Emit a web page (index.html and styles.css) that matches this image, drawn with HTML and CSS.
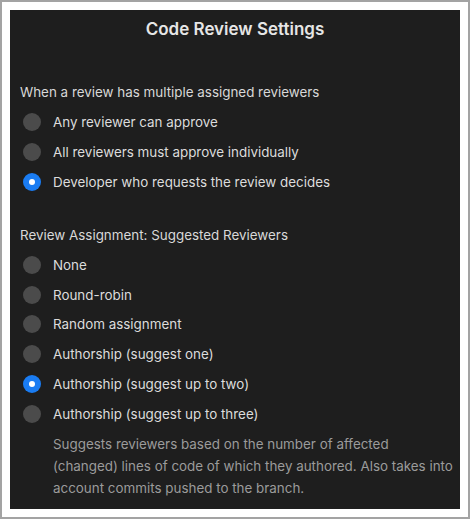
FILE: index.html
```html
<!DOCTYPE html>
<html>
<head>
<meta charset="utf-8">
<link rel="stylesheet" href="styles.css">
</head>
<body>
<div class="frame">
  <div class="panel">
    <h1 class="title">Code Review Settings</h1>
    <section class="group first">
      <div class="group-label">When a review has multiple assigned reviewers</div>
      <div class="option"><span class="radio"></span><span class="label">Any reviewer can approve</span></div>
      <div class="option"><span class="radio"></span><span class="label">All reviewers must approve individually</span></div>
      <div class="option"><span class="radio checked"></span><span class="label">Developer who requests the review decides</span></div>
    </section>
    <section class="group second">
      <div class="group-label">Review Assignment: Suggested Reviewers</div>
      <div class="option"><span class="radio"></span><span class="label">None</span></div>
      <div class="option"><span class="radio"></span><span class="label">Round-robin</span></div>
      <div class="option"><span class="radio"></span><span class="label">Random assignment</span></div>
      <div class="option"><span class="radio"></span><span class="label">Authorship (suggest one)</span></div>
      <div class="option"><span class="radio checked"></span><span class="label">Authorship (suggest up to two)</span></div>
      <div class="option"><span class="radio"></span><span class="label">Authorship (suggest up to three)</span></div>
      <p class="help">Suggests reviewers based on the number of affected (changed) lines of code of which they authored. Also takes into account commits pushed to the branch.</p>
    </section>
  </div>
</div>
</body>
</html>
```
FILE: styles.css
```css
* { box-sizing: border-box; }
html, body { margin: 0; padding: 0; background: #ffffff; }
body { font-family: Inter, "Liberation Sans", sans-serif; }
.frame {
  width: 470px;
  height: 519px;
  border: 2px solid #a3a3a3;
  padding: 8px 7px 8px 8px;
  background: #ffffff;
}
.panel {
  width: 450px;
  height: 499px;
  background: #1e1e1e;
  padding: 0 10px;
  color: #dcdcdc;
}
.title {
  margin: 0;
  height: 38px;
  line-height: 38px;
  text-align: center;
  font-size: 17px;
  font-weight: 600;
  color: #e6e6e6;
}
.group.first { padding-top: 34px; }
.group.second { padding-top: 28px; }
.group-label {
  font-size: 13.4px;
  line-height: 20px;
  height: 20px;
  margin-bottom: 5px;
  color: #d8d8d8;
}
.option {
  display: flex;
  align-items: center;
  height: 30px;
}
.second .option { height: 29.8px; }
.radio {
  width: 18px;
  height: 18px;
  border-radius: 50%;
  background: #4b4b4b;
  margin-left: 3px;
  margin-right: 12px;
  flex: none;
  display: flex;
  align-items: center;
  justify-content: center;
}
.radio.checked { background: #1a7cf2; }
.radio.checked::after {
  content: "";
  width: 6px;
  height: 6px;
  border-radius: 50%;
  background: #ffffff;
}
.label {
  font-size: 13.4px;
  color: #dcdcdc;
}
.help {
  margin: 4px -6px 0 33px;
  font-size: 13.4px;
  line-height: 22px;
  color: #9b9b9b;
}
```
